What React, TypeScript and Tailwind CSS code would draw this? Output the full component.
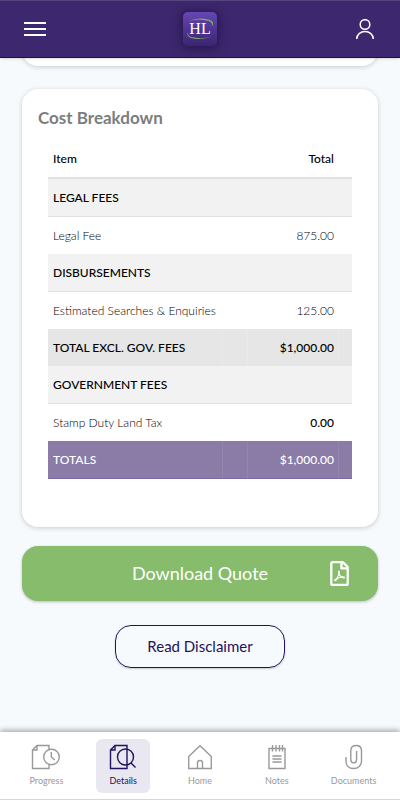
import type { ReactNode } from "react";
import { FaRegFilePdf } from "react-icons/fa";

type Row = { label: string; total?: string; kind: "section" | "item" | "subtotal" | "grand"; strong?: boolean };

const rows: Row[] = [
  { label: "LEGAL FEES", kind: "section" },
  { label: "Legal Fee", total: "875.00", kind: "item" },
  { label: "DISBURSEMENTS", kind: "section" },
  { label: "Estimated Searches & Enquiries", total: "125.00", kind: "item" },
  { label: "TOTAL EXCL. GOV. FEES", total: "$1,000.00", kind: "subtotal" },
  { label: "GOVERNMENT FEES", kind: "section" },
  { label: "Stamp Duty Land Tax", total: "0.00", kind: "item", strong: true },
  { label: "TOTALS", total: "$1,000.00", kind: "grand" },
];

const rowStyles = {
  section: "h-[38px] bg-[#f2f2f2] font-medium text-black",
  item: "h-[37px] bg-white font-light text-black",
  subtotal: "h-[37px] bg-[#e6e6e6] font-medium text-black",
  grand: "h-[38px] bg-[#8a7ba7] font-medium text-white",
};

const cellStyles = {
  section: "border-b border-[#dee2e6]",
  item: "",
  subtotal: "border-l border-[#e9e9e9] first:border-l-0",
  grand: "border-l border-b border-l-[#9487ae] border-b-[#7a68a0] first:border-l-0",
};

function Icon({ children }: { children: ReactNode }) {
  return (
    <svg className="h-[26px] w-[30px]" viewBox="0 0 30 26" fill="none" stroke="currentColor" strokeWidth="1.4" aria-hidden="true">
      {children}
    </svg>
  );
}

const tabs = [
  {
    label: "Progress",
    icon: (
      <Icon>
        <path d="M18 6V1.500H6L1.500 6v18.500H18V20M6 1.500V6H1.500" />
        <circle cx="20.500" cy="13" r="7.800" />
        <path d="M20.300 8v5l3.500 3" />
      </Icon>
    ),
  },
  {
    label: "Details",
    active: true,
    icon: (
      <Icon>
        <path d="M19 6V1.500H7L2.500 6v18.500H19V6M7 1.500V6H2.500" />
        <circle cx="17.500" cy="13" r="8" />
        <path d="m23 19 4.500 4.500" />
      </Icon>
    ),
  },
  {
    label: "Home",
    icon: (
      <Icon>
        <path d="M3.700 12.500 15 1.700l11.300 10.800v12H3.700zM12.500 24.500v-6q0-2 2.500-2t2.500 2v6" />
      </Icon>
    ),
  },
  {
    label: "Notes",
    icon: (
      <Icon>
        <path d="M7 4.500h16v20H7zM10.500 1v6.500M14 1v6.500M17.500 1v6.500M20.500 1v6.500M10.500 12h9M10.500 15h9M10.500 18h9" />
      </Icon>
    ),
  },
  {
    label: "Documents",
    icon: (
      <Icon>
        <path d="M7 13v4c0 4.500 3 7.500 7.500 7.500S22.500 21.500 22.500 17V6.500C22.500 3.500 20.500 1.500 17.200 1.500S11.800 3.500 11.800 6.500V15c0 2.500 1 3.800 2.900 3.800s2.900-1.300 2.900-3.800V7" />
      </Icon>
    ),
  },
];

export default function App() {
  return (
    <div className="flex min-h-screen flex-col bg-[#f6fafd] font-['Lato',sans-serif]">
      <header className="z-10 grid h-[58px] grid-cols-[1fr_auto_1fr] items-center border-t border-b border-t-[#554580] border-b-[#22065f] bg-[#3d286f] px-6 text-white shadow-sm">
        <button type="button" aria-label="Menu" className="flex w-[22px] flex-col gap-1">
          <span className="h-[2px] bg-white" />
          <span className="h-[2px] bg-white" />
          <span className="h-[2px] bg-white" />
        </button>
        <div className="flex h-[34px] w-[34px] items-center justify-center rounded-[5px] bg-linear-to-b from-[#6746b4] to-[#3b2570] shadow-[0_1px_8px_3px_#2c1a55]">
          <svg className="h-[34px] w-[34px]" viewBox="0 0 34 34" role="img" aria-label="HL">
            <path d="M5 9Q17 4.500 27 8q5 2 2 6.500 1-4-3-5.500Q16 6 5 9M29 24.500q-11 4-21 1.500-5-2-3-6.500-1 4 3 5.500 10 2.500 21-.5" fill="#79b765" />
            <text x="17" y="22" textAnchor="middle" fontFamily="Liberation Serif, serif" fontSize="16" fill="#fff">HL</text>
          </svg>
        </div>
        <button type="button" aria-label="Account" className="mr-px justify-self-end">
          <svg className="h-5 w-5" viewBox="0 0 20 20" fill="none" stroke="currentColor" strokeWidth="1.500" aria-hidden="true">
            <circle cx="10" cy="5.500" r="4.800" />
            <path d="M1.700 20c0-4.500 3.800-7.500 8.300-7.500s8.300 3 8.300 7.500" />
          </svg>
        </button>
      </header>

      <main className="flex flex-1 flex-col px-[22px]">
        <div className="-mt-6 h-8 rounded-b-2xl bg-white shadow-[0_1px_5px_#00000030]" />

        <section className="mt-[23px] rounded-2xl bg-white px-4 pt-[19px] pb-12 shadow-[0_1px_5px_#00000030]">
          <h2 className="text-[17px] leading-5 font-bold text-[#7d7d7d]">Cost Breakdown</h2>
          <div className="mt-3 px-[10px]">
            <table className="w-full table-fixed border-separate border-spacing-0 text-[12px] leading-4">
              <colgroup>
                <col />
                <col className="w-[25px]" />
                <col className="w-[91px]" />
                <col className="w-[14px]" />
              </colgroup>
              <thead>
                <tr className="h-[39px] text-black">
                  <th scope="col" className="border-b-2 border-[#dee2e6] pl-[5px] text-left font-medium">Item</th>
                  <th className="border-b-2 border-[#dee2e6]" />
                  <th scope="col" className="border-b-2 border-[#dee2e6] pr-1 text-right font-medium">Total</th>
                  <th className="border-b-2 border-[#dee2e6]" />
                </tr>
              </thead>
              <tbody>
                {rows.map((row) => (
                  <tr key={row.label} className={rowStyles[row.kind]}>
                    <td className={`pl-[5px] whitespace-nowrap ${cellStyles[row.kind]}`}>{row.label}</td>
                    <td className={cellStyles[row.kind]} />
                    <td className={`pr-1 text-right ${row.strong ? "font-medium text-black" : ""} ${cellStyles[row.kind]}`}>{row.total}</td>
                    <td className={cellStyles[row.kind]} />
                  </tr>
                ))}
              </tbody>
            </table>
          </div>
        </section>

        <button type="button" className="mt-[19px] grid h-[55px] grid-cols-[1fr_auto_1fr] items-center rounded-2xl bg-[#86bc6b] text-[18px] text-white shadow-[0_1px_3px_#00000040]">
          <span className="col-start-2">Download Quote</span>
          <FaRegFilePdf className="mr-7 h-[25px] w-[21px] justify-self-end" aria-hidden="true" />
        </button>

        <button type="button" className="mt-6 mb-8 h-[43px] w-[170px] self-center rounded-2xl border border-[#22125f] text-[15px] text-[#22125f] shadow-[0_1px_2px_#00000030]">
          Read Disclaimer
        </button>
      </main>

      <nav className="flex h-[68px] items-center justify-around border-b border-[#d5d5de] bg-white px-2 shadow-[0_-2px_5px_#00000050]">
        {tabs.map((tab) => (
          <a
            key={tab.label}
            href={`#${tab.label.toLowerCase()}`}
            aria-current={tab.active ? "page" : undefined}
            className={`flex h-[54px] w-[54px] flex-col items-center gap-[5px] rounded-md pt-[5px] text-[9px] leading-3 ${tab.active ? "bg-[#e9e8f0] text-[#22125f]" : "text-[#999]"}`}
          >
            {tab.icon}
            <span>{tab.label}</span>
          </a>
        ))}
      </nav>
    </div>
  );
}
